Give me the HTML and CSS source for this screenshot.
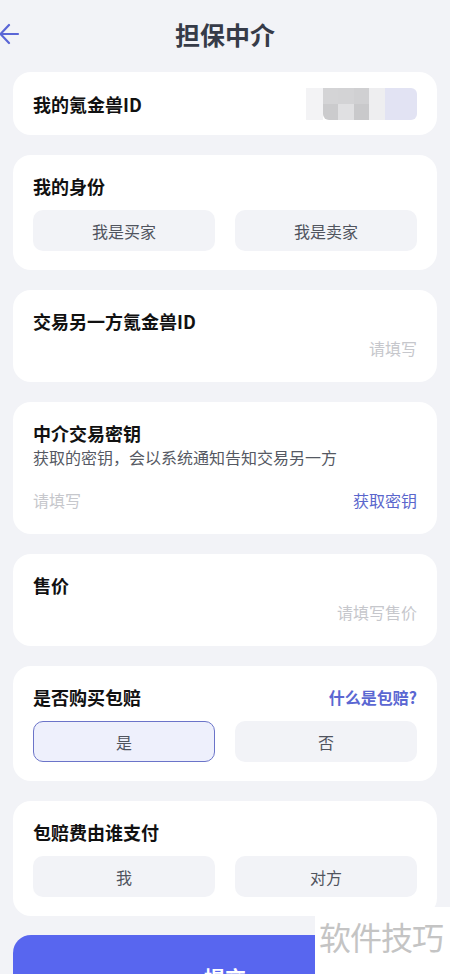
FILE: index.html
```html
<!DOCTYPE html>
<html lang="zh-CN">
<head>
    <meta charset="UTF-8">
    <meta name="viewport" content="width=device-width, initial-scale=1.0">
    <title>担保中介</title>
    <link rel="stylesheet" href="styles.css">
</head>
<body>
    <div class="page">
        <!-- 顶部导航 -->
        <header class="topbar">
            <svg class="back-icon" width="22" height="26" viewBox="0 0 22 26">
                <path d="M19 13 H2 M10 4 L1.5 13 L10 22" fill="none" stroke="#5a66d6" stroke-width="2.2" stroke-linecap="round" stroke-linejoin="round"/>
            </svg>
            <h1>担保中介</h1>
            <span></span>
        </header>

        <div class="card card-id">
            <span class="label">我的氪金兽ID</span>
            <div class="blur-id">
                <i class="c1"></i><i class="c2"></i><i class="c3"></i><i class="c4"></i><i class="c5"></i><i class="c6"></i><i class="c6"></i>
                <i class="c1"></i><i class="c7"></i><i class="c8"></i><i class="c9"></i><i class="c5"></i><i class="c6"></i><i class="c6"></i>
            </div>
        </div>

        <div class="card">
            <div class="label">我的身份</div>
            <div class="options">
                <button class="option">我是买家</button>
                <button class="option">我是卖家</button>
            </div>
        </div>

        <div class="card card-input">
            <div class="label">交易另一方氪金兽ID</div>
            <div class="field right">请填写</div>
        </div>

        <div class="card card-input">
            <div class="label">中介交易密钥</div>
            <div class="hint">获取的密钥，会以系统通知告知交易另一方</div>
            <div class="field key-row">
                <span>请填写</span>
                <a class="link">获取密钥</a>
            </div>
        </div>

        <div class="card card-input">
            <div class="label">售价</div>
            <div class="field right">请填写售价</div>
        </div>

        <div class="card">
            <div class="label-row">
                <span class="label">是否购买包赔</span>
                <a class="link strong">什么是包赔?</a>
            </div>
            <div class="options">
                <button class="option active">是</button>
                <button class="option">否</button>
            </div>
        </div>

        <div class="card">
            <div class="label">包赔费由谁支付</div>
            <div class="options">
                <button class="option">我</button>
                <button class="option">对方</button>
            </div>
        </div>

        <button class="submit">提交</button>

        <div class="watermark">软件技巧</div>
    </div>
</body>
</html>
```

FILE: styles.css
```css
* {
    box-sizing: border-box;
}

body {
    margin: 0;
    padding: 0;
    background-color: #f2f3f7;
    font-family: "Noto Sans CJK SC", "Noto Sans", sans-serif;
}

.page {
    position: relative;
    height: 974px;
    overflow: hidden;
    padding: 0 13px;
    display: flex;
    flex-direction: column;
    gap: 20px;
}

.page > * {
    flex-shrink: 0;
}

/* 顶部导航 */
.topbar {
    height: 52px;
    display: grid;
    grid-template-columns: 1fr auto 1fr;
    align-items: center;
    margin: 0 -13px;
    padding-top: 16px;
}

.back-icon {
    display: block;
    margin-left: -1px;
}

h1 {
    margin: 0;
    font-size: 25px;
    line-height: 34px;
    font-weight: 700;
    color: #363b48;
}

.card {
    background-color: #fff;
    border-radius: 18px;
    padding: 20px 20px 19px;
}

.label {
    font-size: 18px;
    line-height: 22px;
    font-weight: 700;
    color: #111;
}

.label-row {
    display: flex;
    justify-content: space-between;
    align-items: center;
    height: 22px;
    line-height: 22px;
}

.card-id {
    display: flex;
    justify-content: space-between;
    align-items: center;
    padding: 16px 20px 15px;
}

.blur-id {
    display: grid;
    grid-template-columns: 17px 15px 16px 15px 16px 16px 16px;
    grid-template-rows: 16px 16px;
    border-radius: 0 6px 6px 0;
    overflow: hidden;
}

.c1 { background: #f3f3f5; }
.c2 { background: #d4d4d6; }
.c3 { background: #d3d3d5; }
.c4 { background: #d0d0d2; }
.c5 { background: #eeeef0; }
.c6 { background: #e2e3f3; }
.c7 { background: #cbcbcd; border-bottom-left-radius: 6px; }
.c8 { background: #e0e0e2; }
.c9 { background: #c9c9cb; }

.options {
    display: grid;
    grid-template-columns: 1fr 1fr;
    gap: 20px;
    margin-top: 13px;
}

.option {
    height: 41px;
    border: none;
    border-radius: 10px;
    background-color: #f2f3f7;
    font-family: inherit;
    font-size: 16px;
    color: #50545e;
    padding: 0;
}

.option.active {
    background-color: #eef0fc;
    border: 1.5px solid #6b74c9;
}

/* 输入类卡片 */
.card-input {
    padding-bottom: 24px;
}

.field {
    margin-top: 6px;
    font-size: 16px;
    line-height: 20px;
    color: #c6c7cc;
}

.field.right {
    text-align: right;
}

.hint {
    margin-top: 2px;
    font-size: 16px;
    line-height: 22px;
    color: #555963;
}

.key-row {
    margin-top: 22px;
    display: flex;
    justify-content: space-between;
}

.link {
    color: #5a66cc;
    font-size: 16px;
}

.link.strong {
    font-weight: 700;
    color: #5b67d2;
}

.submit {
    height: 84px;
    margin-top: -1px;
    border: none;
    border-radius: 18px;
    background-color: #5866ef;
    color: #fff;
    font-family: inherit;
    font-size: 21px;
    font-weight: 700;
}

.watermark {
    position: absolute;
    right: 0;
    bottom: 0;
    width: 135px;
    height: 67px;
    padding-left: 4px;
    background-color: #fff;
    color: #c4c4c4;
    font-size: 32px;
    line-height: 58px;
    letter-spacing: -1px;
}
```
